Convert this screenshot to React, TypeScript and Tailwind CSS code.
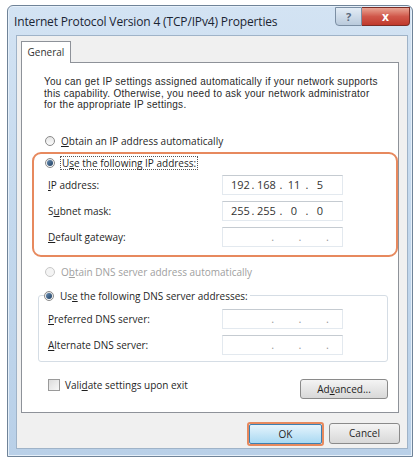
import React from "react";

const U = ({ children }: { children: React.ReactNode }) => (
  <span className="underline decoration-[1px] underline-offset-[1px]">{children}</span>
);

function Radio({ checked, disabled }: { checked?: boolean; disabled?: boolean }) {
  return (
    <span
      className={`relative inline-flex h-[10px] w-[10px] shrink-0 items-center justify-center rounded-full border ${
        disabled ? "border-[#c8c8c8] bg-[#f4f4f4]" : "border-[#8a8a8a] bg-gradient-to-b from-[#e6e6e6] to-[#fbfbfb]"
      }`}
    >
      {checked && <span className="h-[6px] w-[6px] rounded-full bg-gradient-to-br from-[#6a8fb5] to-[#1e3e60]" />}
    </span>
  );
}

function IpField({ value }: { value: string[] }) {
  return (
    <div className="flex h-[20px] w-[121px] items-center border border-[#e3e9ef] border-t-[#c5cbd1] bg-white pl-[8px] text-[11px] text-[#333]">
      {value[0] ? (
        <div className="flex w-[100px] items-center">
          <span className="w-[18px] text-center">{value[0]}</span>
          <span className="w-[8px] text-center">.</span>
          <span className="w-[18px] text-center">{value[1]}</span>
          <span className="w-[12px] text-center">.</span>
          <span className="w-[14px] text-center">{value[2]}</span>
          <span className="w-[12px] text-center">.</span>
          <span className="w-[14px] text-center">{value[3]}</span>
        </div>
      ) : (
        <div className="flex w-[110px] items-center pl-[28px] text-[#999]">
          <span className="w-[29px] text-center">.</span>
          <span className="w-[29px] text-center">.</span>
          <span className="w-[29px] text-center">.</span>
        </div>
      )}
    </div>
  );
}

export default function App() {
  return (
    <div
      className="h-[459px] w-[418px] overflow-hidden bg-white pl-[7px] pt-[5px] text-[#1f1f1f]"
      style={{ fontFamily: '"Open Sans", "Noto Sans", sans-serif' }}
    >
      {/* window */}
      <div className="flex h-[452px] w-[406px] flex-col rounded-t-[6px] border border-[#6f8398] bg-gradient-to-b from-[#d3e3f3] via-[#c3d8ed] to-[#b9d0e8] shadow-[inset_0_0_0_1px_#e6f0fa]">
        {/* title bar */}
        <div className="flex h-[29px] shrink-0 items-start">
          <div className="pl-[6px] pt-[8px] text-[12px] leading-[15px] tracking-[-0.15px] text-[#1b2533]">
            Internet Protocol Version 4 (TCP/IPv4) Properties
          </div>
          <div className="ml-auto mr-[2px] mt-[1px] flex h-[19px]">
            <div className="flex w-[27px] items-center justify-center rounded-bl-[4px] border border-[#7b8ea3] bg-gradient-to-b from-[#e3ecf5] to-[#b9cadc] text-[11px] font-bold leading-none text-[#5a6a7c]">
              ?
            </div>
            <div className="flex w-[48px] items-center justify-center rounded-br-[4px] border border-l-0 border-[#7a2c25] bg-gradient-to-b from-[#e8a393] via-[#d0574a] to-[#c0392d] text-[12px] font-bold leading-none text-white">
              x
            </div>
          </div>
        </div>

        {/* client area */}
        <div className="ml-[8px] mr-[4px] flex h-[414px] flex-col border border-[#9fb3c8] bg-[#f0f0f0] pl-[4px] pt-[5px]">
          {/* tab */}
          <div className="relative z-10 -mb-[1px] flex h-[22px] w-[50px] items-center justify-center border border-b-0 border-[#8e9299] bg-white text-[10px] text-[#333]">
            General
          </div>
          {/* tab panel */}
          <div className="flex h-[351px] w-[378px] flex-col border border-[#8e9299] bg-white text-[10px] leading-[14px]">
            <p
              className="ml-[22px] pt-[13px] text-[10px] leading-[11.5px] tracking-[0.27px] text-[#2a2a2a]"
              style={{ fontFamily: '"Liberation Sans", Arial, sans-serif' }}
            >
              You can get IP settings assigned automatically if your network supports
              <br />
              this capability. Otherwise, you need to ask your network administrator
              <br />
              for the appropriate IP settings.
            </p>

            <div className="ml-[23px] mt-[23px] flex h-[14px] items-center gap-[6px]">
              <Radio />
              <span>
                <U>O</U>btain an IP address automatically
              </span>
            </div>

            {/* annotated IP block */}
            <div className="ml-[10px] mt-[4px] w-[366px] rounded-[9px] border-2 border-[#e7895e] pb-[8px] pt-[2px]">
              <div className="ml-[11px] flex h-[14px] items-center gap-[5px]">
                <Radio checked />
                <span className="border border-dotted border-[#555] px-[1px] leading-[12px]">
                  U<U>s</U>e the following IP address:
                </span>
              </div>
              <div className="mt-[5px] flex flex-col gap-[6px]">
                <div className="flex items-center">
                  <span className="w-[188px] pl-[14px]">
                    <U>I</U>P address:
                  </span>
                  <IpField value={["192", "168", "11", "5"]} />
                </div>
                <div className="flex items-center">
                  <span className="w-[188px] pl-[14px]">
                    S<U>u</U>bnet mask:
                  </span>
                  <IpField value={["255", "255", "0", "0"]} />
                </div>
                <div className="flex items-center">
                  <span className="w-[188px] pl-[14px]">
                    <U>D</U>efault gateway:
                  </span>
                  <IpField value={["", "", "", ""]} />
                </div>
              </div>
            </div>

            <div className="ml-[23px] mt-[8px] flex h-[14px] items-center gap-[6px] text-[#a0a0a0]">
              <Radio disabled />
              <span>
                O<U>b</U>tain DNS server address automatically
              </span>
            </div>

            {/* DNS groupbox */}
            <div className="ml-[16px] mt-[16px] w-[350px] rounded-[3px] border border-[#d5dde5] pb-[6px] pl-[5px]">
              <div className="-mt-[7px] flex h-[14px] w-fit items-center gap-[6px] bg-white pr-[2px]">
                <Radio checked />
                <span>
                  Us<U>e</U> the following DNS server addresses:
                </span>
              </div>
              <div className="mt-[6px] flex flex-col gap-[6px]">
                <div className="flex items-center">
                  <span className="w-[178px] pl-[4px]">
                    <U>P</U>referred DNS server:
                  </span>
                  <IpField value={["", "", "", ""]} />
                </div>
                <div className="flex items-center">
                  <span className="w-[178px] pl-[4px]">
                    <U>A</U>lternate DNS server:
                  </span>
                  <IpField value={["", "", "", ""]} />
                </div>
              </div>
            </div>

            <div className="mt-[16px] flex items-start pr-[10px]">
              <div className="ml-[26px] flex h-[14px] items-center gap-[5px]">
                <span className="h-[12px] w-[12px] border border-[#9a9a9a] bg-gradient-to-br from-[#dcdcdc] to-[#f8f8f8]" />
                <span>
                  Vali<U>d</U>ate settings upon exit
                </span>
              </div>
              <div className="ml-auto mt-[1px] flex h-[20px] w-[88px] items-center justify-center rounded-[3px] border border-[#8a8a8a] bg-gradient-to-b from-[#f4f4f4] to-[#d8d8d8]">
                Ad<U>v</U>anced...
              </div>
            </div>
          </div>

          {/* buttons */}
          <div className="mr-[7px] mt-[9px] flex justify-end gap-[5px]">
            <div className="rounded-[3px] border-2 border-[#e7895e]">
              <div className="flex h-[20px] w-[73px] items-center justify-center rounded-[2px] border border-[#3c7fb1] bg-gradient-to-b from-[#e5f4fc] to-[#a9d9f2] text-[10px]">
                OK
              </div>
            </div>
            <div className="mt-[1px] flex h-[21px] w-[71px] items-center justify-center rounded-[3px] border border-[#8a8a8a] bg-gradient-to-b from-[#f4f4f4] to-[#d8d8d8] text-[10px]">
              Cancel
            </div>
          </div>
        </div>
      </div>
    </div>
  );
}
